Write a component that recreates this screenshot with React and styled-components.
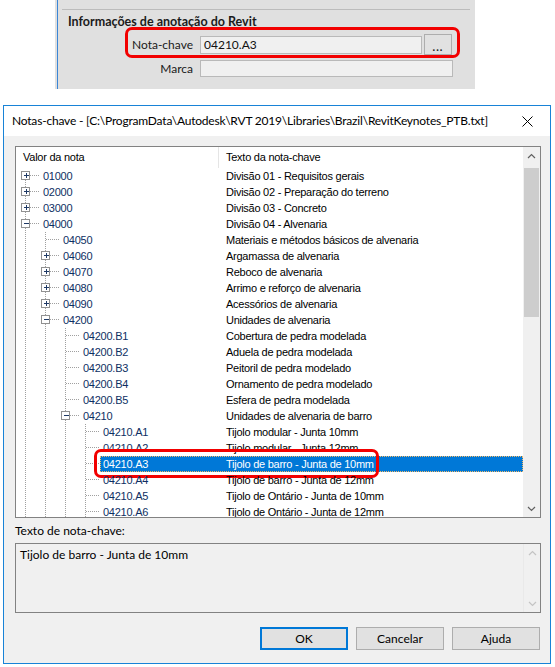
import React from 'react';
import styled, { createGlobalStyle, css } from 'styled-components';

const UI = `Lato, "Noto Sans", "Liberation Sans", sans-serif`;
const TREE = `"Liberation Sans", Arial, sans-serif`;

const GlobalStyle = createGlobalStyle`
  html, body { margin: 0; padding: 0; background: #fff; }
  body { font-family: ${UI}; color: #000; }
  * { box-sizing: border-box; }
`;

const Page = styled.div`
  width: 555px;
  height: 667px;
  overflow: hidden;
  display: flex;
  flex-direction: column;
`;

/* ---------- Revit properties strip ---------- */

const PropsPanel = styled.section`
  margin-left: 55px;
  width: 420px;
  height: 89px;
  background: #e0e0e0;
  padding-left: 2px;
  display: flex;
`;

const PanelInner = styled.div`
  flex: 1;
  border-left: 1px solid #3b86d6;
  padding-top: 9px;
  display: flex;
  flex-direction: column;
`;

const Rule = styled.div`
  height: 1px;
  background: #bcbcbc;
  margin: 0 5px 0 4px;
`;

const GroupTitle = styled.div`
  margin: 4px 0 0 10px;
  font: bold 12.5px/16px ${UI};
  color: #1b1b1b;
`;

const FieldRow = styled.div`
  position: relative;
  display: flex;
  align-items: center;
  height: ${(p) => p.$h}px;
  margin-top: ${(p) => p.$mt}px;
`;

const FieldLabel = styled.div`
  width: 135px;
  margin-right: 7px;
  text-align: right;
  font: 12px/16px ${UI};
  color: #1a1a1a;
`;

const TextBox = styled.div`
  width: ${(p) => p.$w}px;
  height: ${(p) => p.$h}px;
  background: #f0f0f0;
  border: 1px solid #b9b9b9;
  padding-left: 3px;
  font: 12px/16px ${UI};
  color: #111;
`;

const BrowseButton = styled.div`
  margin-left: 2px;
  width: 28px;
  height: 21px;
  background: #e1e1e1;
  border: 1px solid #adadad;
  display: flex;
  align-items: center;
  justify-content: center;
  padding-top: 3px;
  font: bold 11px/1 ${UI};
  letter-spacing: 1px;
  color: #222;
`;

const Callout = styled.div`
  position: absolute;
  left: ${(p) => p.$x}px;
  top: ${(p) => p.$y}px;
  width: ${(p) => p.$w}px;
  height: ${(p) => p.$h}px;
  border: 3px solid #f20000;
  border-radius: 7px;
  pointer-events: none;
`;

/* ---------- Keynotes dialog ---------- */

const Dialog = styled.div`
  margin: 16px 0 0 3px;
  width: 548px;
  height: 559px;
  border: 1px solid #1883d7;
  background: #f0f0f0;
  display: flex;
  flex-direction: column;
`;

const TitleBar = styled.div`
  height: 30px;
  background: #fff;
  display: flex;
  align-items: center;
  padding-left: 8px;
  font: 12px/16px ${UI};
  color: #000;
`;

const TitleText = styled.div`
  flex: 1;
  white-space: nowrap;
  letter-spacing: -0.2px;
`;

const CloseBox = styled.div`
  width: 46px;
  height: 30px;
  display: flex;
  align-items: center;
  justify-content: center;
`;

const DialogBody = styled.div`
  flex: 1;
  display: flex;
  flex-direction: column;
  padding: 10px 8px 0 11px;
`;

const TreeBox = styled.div`
  width: 526px;
  height: 372px;
  border: 1px solid #828282;
  background: #fff;
  display: flex;
`;

const ListArea = styled.div`
  flex: 1;
  display: flex;
  flex-direction: column;
  overflow: hidden;
`;

const HeaderRow = styled.div`
  height: 21px;
  flex: none;
  display: flex;
  font: 11px/21px ${TREE};
  letter-spacing: -0.25px;
  color: #000;
`;

const HeaderCell = styled.div`
  width: ${(p) => (p.$w ? `${p.$w}px` : 'auto')};
  flex: ${(p) => (p.$w ? 'none' : '1')};
  padding-left: 7px;
  border-right: ${(p) => (p.$w ? '1px solid #e5e5e5' : 'none')};
`;

const Row = styled.div`
  position: relative;
  height: 16px;
  flex: none;
  display: flex;
`;

const Item = styled.div`
  flex: 1;
  display: flex;
  padding-left: 3px;
  font: 11px/16px ${TREE};
  letter-spacing: -0.25px;
  white-space: nowrap;
  ${(p) =>
    p.$selected &&
    css`
      background: #0078d7;
      outline: 1px dotted #f3b968;
      outline-offset: -1px;
    `}
`;

const CodeLabel = styled.div`
  width: ${(p) => 183 - 20 * p.$level}px;
  color: ${(p) => (p.$selected ? '#fff' : '#0e2f63')};
`;

const TextLabel = styled.div`
  color: ${(p) => (p.$selected ? '#fff' : '#000')};
`;

const VScroll = styled.div`
  width: 17px;
  flex: none;
  background: #f0f0f0;
  display: flex;
  flex-direction: column;
`;

const ArrowCell = styled.div`
  height: 17px;
  flex: none;
  display: flex;
  align-items: center;
  justify-content: center;
`;

const Track = styled.div`
  flex: 1;
  padding: 4px 1px 0;
`;

const Thumb = styled.div`
  height: 149px;
  background: #cdcdcd;
`;

const FieldCaption = styled.div`
  margin-top: 5px;
  font: 12px/16px ${UI};
  color: #000;
`;

const NoteText = styled.div`
  margin-top: 4px;
  width: 526px;
  height: 70px;
  border: 1px solid #828282;
  background: #f0f0f0;
  display: flex;
`;

const NoteBody = styled.div`
  flex: 1;
  padding: 3px 4px;
  font: 12px/16px ${UI};
  color: #000;
`;

const DisabledScroll = styled.div`
  width: 17px;
  display: flex;
  flex-direction: column;
  justify-content: space-between;
  border-left: 1px solid #e9e9e9;
`;

const ButtonRow = styled.div`
  margin-top: 14px;
  margin-right: 2px;
  display: flex;
  justify-content: flex-end;
  gap: 8px;
`;

const Button = styled.div`
  width: 88px;
  height: 23px;
  background: #e1e1e1;
  border: ${(p) => (p.$default ? '2px solid #0078d7' : '1px solid #adadad')};
  display: flex;
  align-items: center;
  justify-content: center;
  font: 12px/16px ${UI};
  color: #000;
`;

/* ---------- drawings ---------- */

const Chevron = ({ up, color = '#606060' }) => (
  <svg width="9" height="6" viewBox="0 0 9 6">
    <path
      d={up ? 'M1 5 L4.5 1.5 L8 5' : 'M1 1 L4.5 4.5 L8 1'}
      fill="none"
      stroke={color}
      strokeWidth="1.2"
    />
  </svg>
);

const CloseIcon = () => (
  <svg width="11" height="11" viewBox="0 0 11 11">
    <path d="M0.5 0.5 L10.5 10.5 M10.5 0.5 L0.5 10.5" stroke="#000" strokeWidth="1" />
  </svg>
);

// Tree connector lines and the expand/collapse box for one row.
const Guides = ({ level, toggle, first }) => {
  const w = 24 + 20 * level;
  const x0 = 9 + 20 * level;
  const dot = { stroke: '#a0a0a0', strokeWidth: 1, strokeDasharray: '1 1', shapeRendering: 'crispEdges' };
  const lines = [];
  for (let k = 0; k < level; k++) {
    const x = 9 + 20 * k + 0.5;
    lines.push(<line key={k} x1={x} y1={0} x2={x} y2={16} {...dot} />);
  }
  return (
    <svg width={w} height="16" style={{ flex: 'none', display: 'block' }}>
      {lines}
      <line x1={x0 + 0.5} y1={first ? 8 : 0} x2={x0 + 0.5} y2={16} {...dot} />
      <line x1={x0 + 1} y1={7.5} x2={w - 1} y2={7.5} {...dot} />
      {toggle && (
        <g shapeRendering="crispEdges">
          <rect x={x0 - 3.5} y={3.5} width={8} height={8} fill="#fff" stroke="#919191" />
          <line x1={x0 - 1} y1={7.5} x2={x0 + 4} y2={7.5} stroke="#1f3a66" />
          {toggle === '+' && <line x1={x0 + 1.5} y1={5} x2={x0 + 1.5} y2={10} stroke="#1f3a66" />}
        </g>
      )}
    </svg>
  );
};

const rows = [
  { code: '01000', text: 'Divisão 01 - Requisitos gerais', level: 0, toggle: '+', first: true },
  { code: '02000', text: 'Divisão 02 - Preparação do terreno', level: 0, toggle: '+' },
  { code: '03000', text: 'Divisão 03 - Concreto', level: 0, toggle: '+' },
  { code: '04000', text: 'Divisão 04 - Alvenaria', level: 0, toggle: '-' },
  { code: '04050', text: 'Materiais e métodos básicos de alvenaria', level: 1 },
  { code: '04060', text: 'Argamassa de alvenaria', level: 1, toggle: '+' },
  { code: '04070', text: 'Reboco de alvenaria', level: 1, toggle: '+' },
  { code: '04080', text: 'Arrimo e reforço de alvenaria', level: 1, toggle: '+' },
  { code: '04090', text: 'Acessórios de alvenaria', level: 1, toggle: '+' },
  { code: '04200', text: 'Unidades de alvenaria', level: 1, toggle: '-' },
  { code: '04200.B1', text: 'Cobertura de pedra modelada', level: 2 },
  { code: '04200.B2', text: 'Aduela de pedra modelada', level: 2 },
  { code: '04200.B3', text: 'Peitoril de pedra modelado', level: 2 },
  { code: '04200.B4', text: 'Ornamento de pedra modelado', level: 2 },
  { code: '04200.B5', text: 'Esfera de pedra modelada', level: 2 },
  { code: '04210', text: 'Unidades de alvenaria de barro', level: 2, toggle: '-' },
  { code: '04210.A1', text: 'Tijolo modular - Junta 10mm', level: 3 },
  { code: '04210.A2', text: 'Tijolo modular - Junta 12mm', level: 3 },
  { code: '04210.A3', text: 'Tijolo de barro - Junta de 10mm', level: 3, selected: true },
  { code: '04210.A4', text: 'Tijolo de barro - Junta de 12mm', level: 3 },
  { code: '04210.A5', text: 'Tijolo de Ontário - Junta de 10mm', level: 3 },
  { code: '04210.A6', text: 'Tijolo de Ontário - Junta de 12mm', level: 3 },
];

export default function App() {
  return (
    <Page>
      <GlobalStyle />

      <PropsPanel>
        <PanelInner>
          <Rule />
          <GroupTitle>Informações de anotação do Revit</GroupTitle>
          <FieldRow $h={21} $mt={4}>
            <FieldLabel>Nota-chave</FieldLabel>
            <TextBox $w={222} $h={18}>04210.A3</TextBox>
            <BrowseButton>...</BrowseButton>
            <Callout $x={67} $y={-7} $w={335} $h={31} />
          </FieldRow>
          <FieldRow $h={17} $mt={5}>
            <FieldLabel>Marca</FieldLabel>
            <TextBox $w={253} $h={17} />
          </FieldRow>
        </PanelInner>
      </PropsPanel>

      <Dialog>
        <TitleBar>
          <TitleText>
            Notas-chave - [C:\ProgramData\Autodesk\RVT 2019\Libraries\Brazil\RevitKeynotes_PTB.txt]
          </TitleText>
          <CloseBox>
            <CloseIcon />
          </CloseBox>
        </TitleBar>

        <DialogBody>
          <TreeBox>
            <ListArea>
              <HeaderRow>
                <HeaderCell $w={203}>Valor da nota</HeaderCell>
                <HeaderCell>Texto da nota-chave</HeaderCell>
              </HeaderRow>
              {rows.map((r) => (
                <Row key={r.code}>
                  <Guides level={r.level} toggle={r.toggle} first={r.first} />
                  <Item $selected={r.selected}>
                    <CodeLabel $level={r.level} $selected={r.selected}>
                      {r.code}
                    </CodeLabel>
                    <TextLabel $selected={r.selected}>{r.text}</TextLabel>
                  </Item>
                  {r.selected && <Callout $x={78} $y={-7} $w={285} $h={29} />}
                </Row>
              ))}
            </ListArea>
            <VScroll>
              <ArrowCell>
                <Chevron up />
              </ArrowCell>
              <Track>
                <Thumb />
              </Track>
              <ArrowCell>
                <Chevron />
              </ArrowCell>
            </VScroll>
          </TreeBox>

          <FieldCaption>Texto de nota-chave:</FieldCaption>
          <NoteText>
            <NoteBody>Tijolo de barro - Junta de 10mm</NoteBody>
            <DisabledScroll>
              <ArrowCell>
                <Chevron up color="#c4c4c4" />
              </ArrowCell>
              <ArrowCell>
                <Chevron color="#c4c4c4" />
              </ArrowCell>
            </DisabledScroll>
          </NoteText>

          <ButtonRow>
            <Button $default>OK</Button>
            <Button>Cancelar</Button>
            <Button>Ajuda</Button>
          </ButtonRow>
        </DialogBody>
      </Dialog>
    </Page>
  );
}
